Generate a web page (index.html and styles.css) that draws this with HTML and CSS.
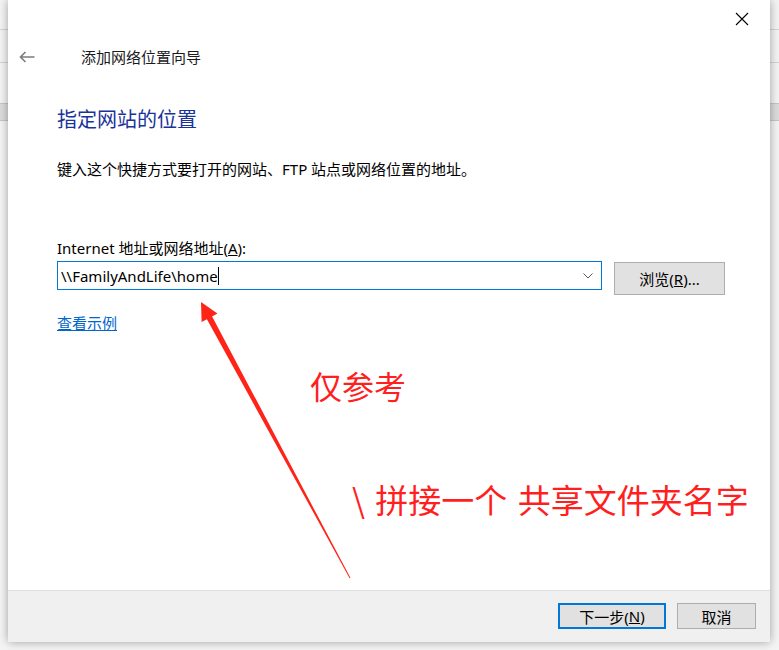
FILE: index.html
```html
<!DOCTYPE html>
<html lang="zh-CN">
<head>
<meta charset="utf-8">
<title>添加网络位置向导</title>
<link rel="stylesheet" href="styles.css">
</head>
<body>
<div class="desktop">
  <div class="dialog">
    <div class="titlebar">
      <span class="close">
        <svg width="14" height="14" viewBox="0 0 14 14"><path d="M1 1 L13 13 M13 1 L1 13" stroke="#000" stroke-width="1.1" fill="none"/></svg>
      </span>
    </div>
    <div class="nav">
      <svg class="back" width="16" height="12" viewBox="0 0 16 12"><path d="M15.5 6 H1.5 M6.5 1 L1.5 6 L6.5 11" stroke="#7b7b7b" stroke-width="1.6" fill="none"/></svg>
      <span class="title">添加网络位置向导</span>
    </div>
    <div class="content">
      <h1 class="heading">指定网站的位置</h1>
      <p class="desc">键入这个快捷方式要打开的网站、FTP 站点或网络位置的地址。</p>
      <div class="label">Internet 地址或网络地址(<u>A</u>):</div>
      <div class="row">
        <div class="combo">
          <span class="value">\\FamilyAndLife\home</span><span class="caret"></span>
          <svg class="chev" width="10" height="6" viewBox="0 0 10 6"><path d="M0.5 0.5 L5 5 L9.5 0.5" stroke="#555" stroke-width="1" fill="none"/></svg>
        </div>
        <button class="btn browse">浏览(<u>R</u>)...</button>
      </div>
      <a class="link" href="#">查看示例</a>
    </div>
    <div class="footer">
      <button class="btn primary">下一步(<u>N</u>)</button>
      <button class="btn cancel">取消</button>
    </div>
    <div class="note note1">仅参考</div>
    <div class="note note2">\ 拼接一个 共享文件夹名字</div>
    <svg class="arrow" width="762" height="642" viewBox="0 0 762 642">
      <polygon fill="#fe2418" points="193,302 209.4,313.5 204.1,316.4 342.4,577.8 341.6,578.2 198.9,319.2 193.6,322.1"/>
    </svg>
  </div>
</div>
</body>
</html>
```
FILE: styles.css
```css
html, body {
  margin: 0;
  padding: 0;
}
body {
  width: 779px;
  height: 650px;
  overflow: hidden;
  font-family: "Noto Sans", "Noto Sans CJK SC", sans-serif;
}
.desktop {
  width: 779px;
  height: 650px;
  box-sizing: border-box;
  padding-left: 8px;
  background:
    linear-gradient(#d4d4d4, #d4d4d4) 0 29px / 100% 1px no-repeat,
    linear-gradient(#d4d4d4, #d4d4d4) 0 62px / 100% 1px no-repeat,
    linear-gradient(#c6c6c6, #c6c6c6) 0 103px / 100% 1px no-repeat,
    linear-gradient(#dcdcdc, #dcdcdc) 0 104px / 100% 16px no-repeat,
    linear-gradient(#c6c6c6, #c6c6c6) 0 120px / 100% 1px no-repeat,
    #f4f4f4;
}
.dialog {
  position: relative;
  width: 762px;
  height: 642px;
  background: #fff;
  display: flex;
  flex-direction: column;
  box-shadow: 0 0 9px rgba(0, 0, 0, 0.35);
}
.titlebar {
  height: 38px;
  display: flex;
  justify-content: flex-end;
  align-items: center;
}
.close {
  width: 14px;
  height: 14px;
  margin-right: 21px;
  display: flex;
}
.nav {
  height: 38px;
  display: flex;
  align-items: center;
}
.back {
  margin-left: 11px;
  margin-right: 46px;
}
.title {
  font-size: 15px;
  color: #1a1a1a;
  line-height: 20px;
}
.content {
  flex: 1;
  padding-left: 49px;
  display: flex;
  flex-direction: column;
  align-items: flex-start;
}
.heading {
  margin: 30px 0 0 0;
  font-size: 20px;
  font-weight: normal;
  line-height: 28px;
  color: #1a3399;
}
.desc {
  margin: 25px 0 0 0;
  font-size: 15px;
  line-height: 20px;
  color: #000;
}
.label {
  margin-top: 59px;
  font-size: 15px;
  line-height: 20px;
  color: #000;
}
.row {
  margin-top: 3px;
  display: flex;
  align-items: flex-start;
  gap: 12px;
}
.combo {
  box-sizing: border-box;
  width: 545px;
  height: 29px;
  border: 1px solid #0078d7;
  display: flex;
  align-items: center;
  padding-left: 3px;
  position: relative;
  font-size: 15px;
}
.value {
  color: #000;
}
.caret {
  width: 1px;
  height: 18px;
  background: #000;
}
.chev {
  margin-left: auto;
  margin-right: 8px;
}
.btn {
  box-sizing: border-box;
  background: #e1e1e1;
  border: 1px solid #adadad;
  font-family: "Noto Sans", "Noto Sans CJK SC", sans-serif;
  font-size: 15px;
  color: #000;
  padding: 0;
  display: flex;
  align-items: center;
  justify-content: center;
}
.browse {
  width: 111px;
  height: 33px;
  margin-top: 1px;
}
.link {
  margin-top: 18px;
  font-size: 15px;
  line-height: 20px;
  color: #0066cc;
  text-decoration: underline;
}
.footer {
  height: 52px;
  box-sizing: border-box;
  background: #f0f0f0;
  border-top: 1px solid #dfdfdf;
  display: flex;
  justify-content: flex-end;
  align-items: flex-start;
  padding: 12px 14px 0 0;
  gap: 11px;
}
.primary {
  width: 108px;
  height: 26px;
  border: 2px solid #0078d7;
}
.cancel {
  width: 79px;
  height: 26px;
}
.note {
  position: absolute;
  color: #ff1f1f;
  font-size: 32px;
  line-height: 40px;
  font-family: "Noto Sans CJK SC", sans-serif;
  white-space: nowrap;
}
.note1 {
  left: 302px;
  top: 365px;
}
.note2 {
  left: 344px;
  top: 479px;
  font-size: 33px;
  word-spacing: 3px;
}
.arrow {
  position: absolute;
  left: 0;
  top: 0;
  pointer-events: none;
}
```
